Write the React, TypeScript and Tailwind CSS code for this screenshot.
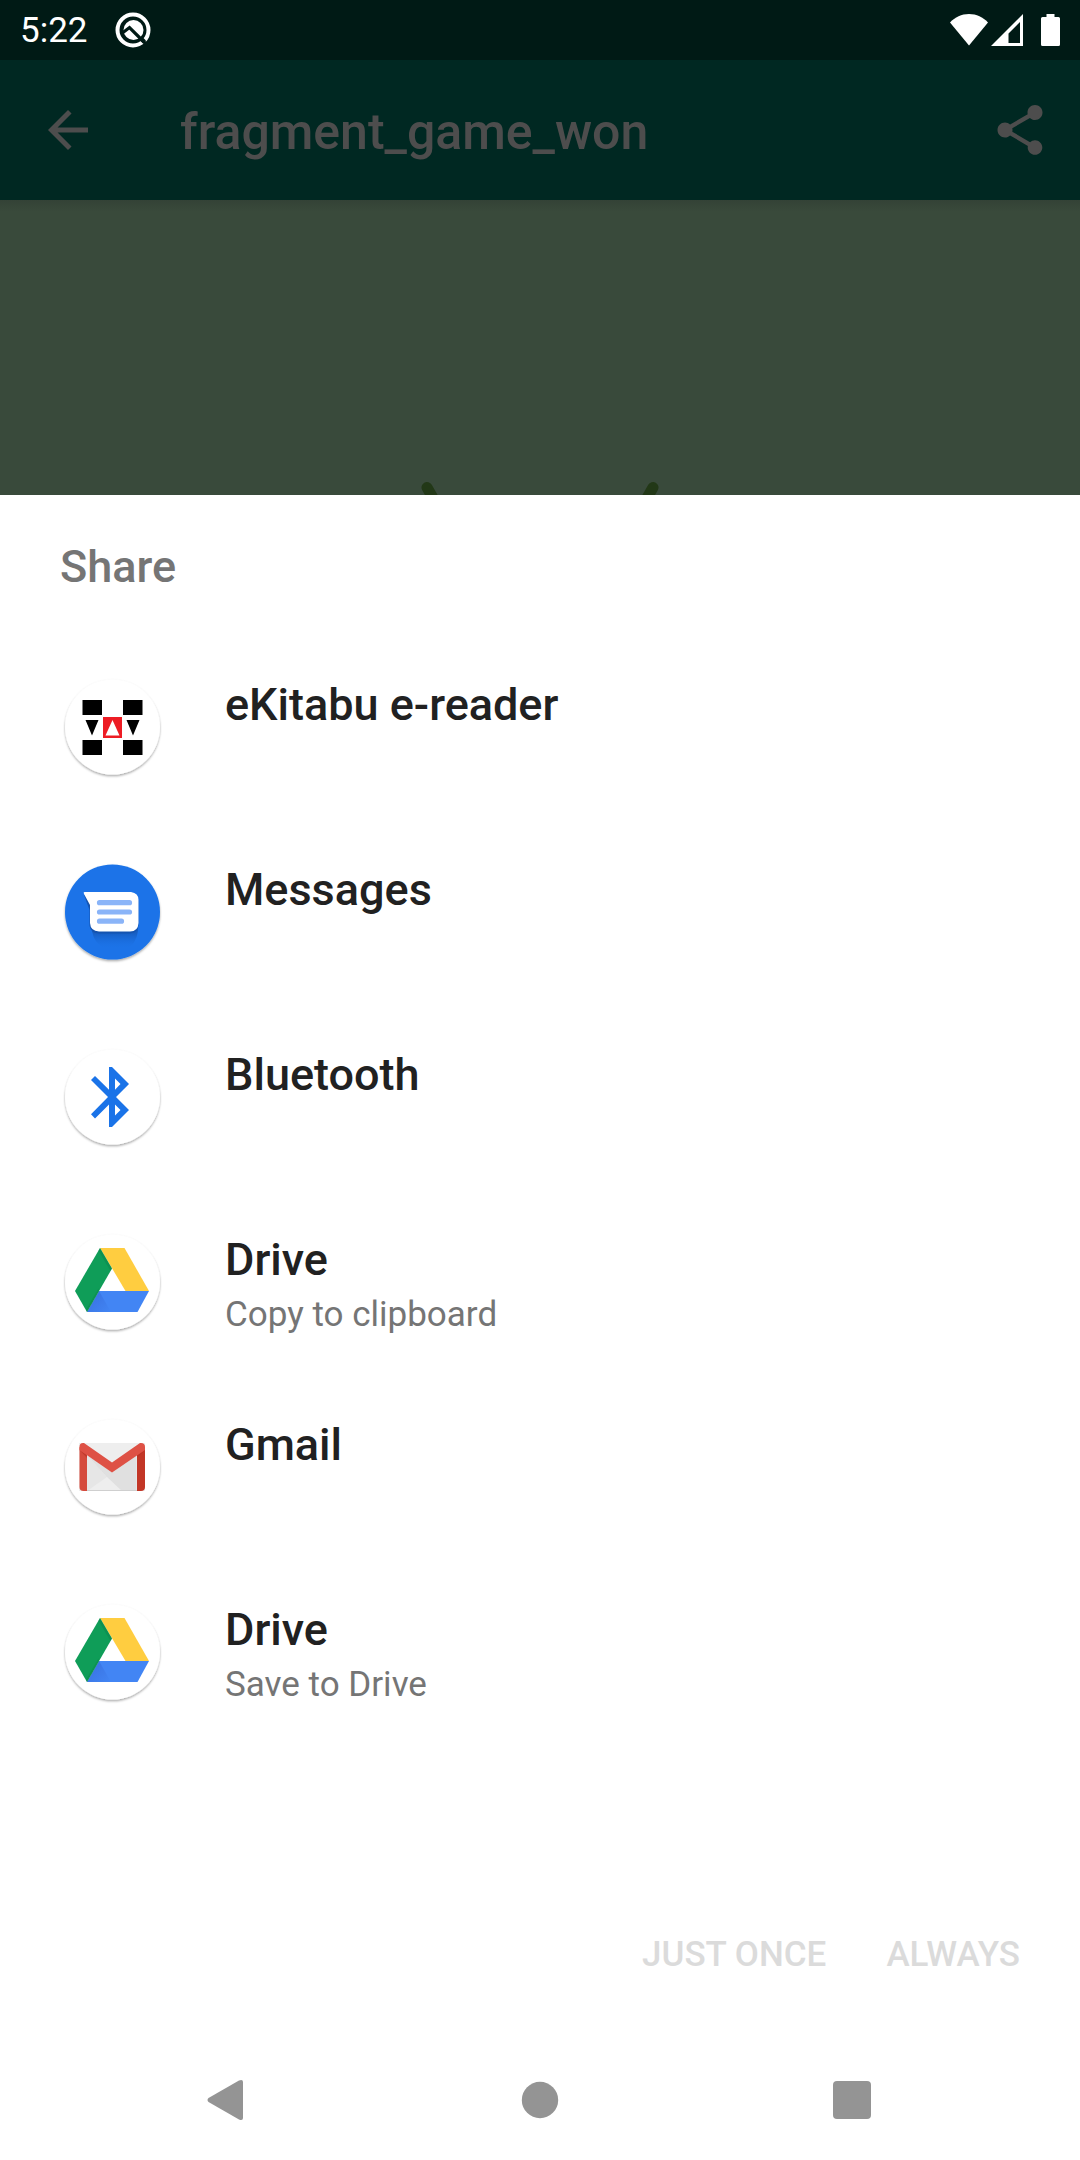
import React from "react";

function StatusBar() {
  return (
    <div className="flex h-[60px] items-center bg-[#001a15] pl-5 pr-5 text-white">
      <span className="pt-[2px] text-[35px] leading-[58px]">5:22</span>
      <svg className="ml-[27px] size-9" viewBox="0 0 36 36" fill="none" aria-hidden="true">
        <circle cx="18" cy="18" r="15.500" stroke="#fff" strokeWidth="4" />
        <circle cx="18.500" cy="18" r="10" fill="#fff" />
        <path d="M6 22L14.500 15.500L31.500 32.500" stroke="#001a15" strokeWidth="3.200" />
        <path d="M25.500 26L29.500 30" stroke="#001a15" strokeWidth="4" />
      </svg>
      <div className="ml-auto flex items-center">
        <svg className="h-8 w-[38px]" viewBox="0 0 38 32" fill="#fff" aria-hidden="true">
          <path d="M0 8.500C5 3.200 11.500 0 19 0S33 3.200 38 8.500L19 31.500Z" />
        </svg>
        <svg className="ml-[3px] size-8" viewBox="0 0 32 32" aria-hidden="true">
          <path fill="#fff" fillRule="evenodd" d="M0 32L32 0V32ZM17.500 29H29V8L17.500 19.500Z" />
        </svg>
        <svg className="ml-[18px] h-8 w-[19px]" viewBox="0 0 19 32" fill="#fff" aria-hidden="true">
          <path d="M5.500 0H13.500V3H17.500Q19 3 19 4.500V30.500Q19 32 17.500 32H1.500Q0 32 0 30.500V4.500Q0 3 1.500 3H5.500Z" />
        </svg>
      </div>
    </div>
  );
}

function Toolbar() {
  return (
    <header className="flex h-[140px] items-center bg-[#002822] pl-[38px] pr-[30px] text-[#4d4d4d]">
      <button type="button" aria-label="Navigate up" className="size-[60px]">
        <svg viewBox="0 0 24 24" fill="currentColor">
          <path d="M20 11H7.830l5.590-5.590L12 4l-8 8 8 8 1.410-1.410L7.830 13H20v-2z" />
        </svg>
      </button>
      <h1 className="ml-[82px] pt-1 text-[50px] font-medium leading-[60px]">fragment_game_won</h1>
      <button type="button" aria-label="Share" className="ml-auto size-[60px]">
        <svg viewBox="0 0 24 24" fill="currentColor">
          <path d="M18 16.080c-.76 0-1.440.3-1.960.77L8.910 12.700c.05-.23.090-.46.090-.7s-.04-.47-.09-.7l7.050-4.110c.54.5 1.250.81 2.040.81 1.660 0 3-1.340 3-3s-1.340-3-3-3-3 1.340-3 3c0 .24.040.47.090.7L8.040 9.810C7.500 9.310 6.790 9 6 9c-1.660 0-3 1.340-3 3s1.340 3 3 3c.79 0 1.500-.31 2.040-.81l7.120 4.160c-.05.21-.08.43-.08.65 0 1.610 1.310 2.920 2.920 2.920s2.920-1.310 2.920-2.920-1.310-2.920-2.920-2.920z" />
        </svg>
      </button>
    </header>
  );
}

function Scene() {
  return (
    <div className="flex flex-1 flex-col items-center justify-end bg-[#394a3b]">
      <div className="mb-auto h-3 w-full bg-linear-to-b from-[#334236] to-[#394a3b]" />
      <svg className="h-[14px] w-[240px]" viewBox="0 0 240 14" aria-hidden="true">
        <g stroke="#223817" strokeWidth="11" strokeLinecap="round">
          <path d="M7 6.500L17 24M233 6.500L223 24" />
        </g>
      </svg>
    </div>
  );
}

function Disc({ blue, children }: { blue?: boolean; children: React.ReactNode }) {
  return (
    <svg className="size-[120px] shrink-0" viewBox="0 0 120 120" aria-hidden="true">
      <defs>
        <filter id="disc-shadow" x="-20%" y="-20%" width="140%" height="140%">
          <feDropShadow dx="0" dy="1.500" stdDeviation="1.300" floodColor="#000" floodOpacity="0.350" />
        </filter>
      </defs>
      <circle cx="60.500" cy="60" r="47.500" fill={blue ? "#1a73e8" : "#fff"} filter="url(#disc-shadow)" />
      {children}
    </svg>
  );
}

function EKitabuIcon() {
  return (
    <Disc>
      <path d="M30.500 33H50V48H30.500ZM71 33H90.500V48H71ZM30.500 73H50V88H30.500ZM71 73H90.500V88H71Z" />
      <path d="M33.500 53H46.500L40 68.500ZM74.500 53H87.500L81 68.500Z" />
      <path fill="#ed1c24" d="M51 50H70V71H51Z" />
      <path fill="#fff" d="M60.500 53L67.500 68.500H53.500Z" />
    </Disc>
  );
}

function MessagesIcon() {
  return (
    <Disc blue>
      <defs>
        <linearGradient id="bubble-shade" x1="0" y1="0" x2="0" y2="1">
          <stop offset="0.400" stopColor="#1558b8" stopOpacity="0.800" />
          <stop offset="1" stopColor="#1a73e8" stopOpacity="0" />
        </linearGradient>
      </defs>
      <path fill="url(#bubble-shade)" d="M40 70H86V79Q84 93 74 97H54Q42 92 40 79Z" />
      <path fill="#1554b0" d="M32 43L37.500 58V74Q39 81.500 47 81.500H78Q86.500 81 86.500 73V48Z" />
      <path fill="#fff" d="M32.500 40H79Q86.500 41 86.500 48V71Q86 79.500 78 79.500H47Q38.500 79 38 71V53L32 42Q31 40 32.500 40Z" />
      <path stroke="#8ab4f8" strokeWidth="5.200" strokeLinecap="round" d="M47.500 50.700H77.500M47.500 60H77.500M47.500 69.200H69.500" />
    </Disc>
  );
}

function BluetoothIcon() {
  return (
    <Disc>
      <path
        fill="#1a73e8"
        fillRule="evenodd"
        d="M57 30H60L77 47L64 60L77 73L60 90H57V67.500L43 81.500L39 77.300L56 60L39 43L43 39L57 52.700ZM63 41.500V52.700L68.500 47.100ZM63 67.500V78.500L68.500 73Z"
      />
    </Disc>
  );
}

function DriveIcon() {
  return (
    <Disc>
      <defs>
        <linearGradient id="drive-blue" x1="0" y1="0" x2="1" y2="1">
          <stop offset="0" stopColor="#3367d6" />
          <stop offset="1" stopColor="#4285f4" />
        </linearGradient>
      </defs>
      <path fill="#4285f4" d="M47 69H97L85.500 90H35Z" />
      <path fill="url(#drive-blue)" d="M47 69L59 90H35Z" opacity="0.700" />
      <path fill="#ffcd40" d="M48 26H72.500L97 69H73.500Z" />
      <path fill="#0f9d58" d="M48 26L60 46.500L35 90L23 69Z" />
      <path fill="#0b8048" opacity="0.400" d="M48 26L60 46.500L58.500 49L46.500 28.500ZM33.800 88L46.500 66.500L47 69L35 90Z" />
    </Disc>
  );
}

function GmailIcon() {
  return (
    <Disc>
      <path fill="#eeeeee" d="M27 36H93V84H27Z" />
      <path fill="#d6d6d6" d="M35 48L55 70L35 84Z" opacity="0.350" />
      <path fill="#d2d2d2" d="M35 48L60 65L84.500 48V84H70L55 70Z" opacity="0.500" />
      <path fill="#cfcfcf" d="M35 83H85V84H35Z" />
      <path fill="#d54b3d" d="M27.500 40L35 47V84H31.500Q27.500 84 27.500 80Z" />
      <path fill="#c23626" d="M93 40L85 47V84H89Q93 84 93 80Z" />
      <path fill="#b63124" opacity="0.600" d="M27.500 43L35 48V51ZM93 43L85 48V51Z" />
      <path fill="#de5145" d="M27.500 40Q27.500 36 31 36H32L60 55.500L88 36H89Q93 36 93 40V43L60 65.500L27.500 43Z" />
    </Disc>
  );
}

const targets = [
  { label: "eKitabu e-reader", icon: <EKitabuIcon /> },
  { label: "Messages", icon: <MessagesIcon /> },
  { label: "Bluetooth", icon: <BluetoothIcon /> },
  { label: "Drive", detail: "Copy to clipboard", icon: <DriveIcon /> },
  { label: "Gmail", icon: <GmailIcon /> },
  { label: "Drive", detail: "Save to Drive", icon: <DriveIcon /> },
];

function ShareSheet() {
  return (
    <section className="bg-white">
      <h2 className="px-[60px] pt-[45px] text-[45px] font-medium leading-[54px] text-[#757575]">Share</h2>
      <ul className="pt-10">
        {targets.map((target) => (
          <li key={target.label + (target.detail ?? "")}>
            <button type="button" className="flex h-[185px] w-full items-center pl-[52px] pr-[60px] text-left">
              {target.icon}
              <span className="ml-[53px] flex h-[100px] flex-col">
                <span className="text-[45px] font-medium leading-[56px] text-[#212121]">{target.label}</span>
                {target.detail && <span className="text-[35px] leading-[54px] text-[#757575]">{target.detail}</span>}
              </span>
            </button>
          </li>
        ))}
      </ul>
      <div className="flex justify-end gap-[60px] px-[60px] pb-[58px] pt-[184px] text-[35px] font-medium leading-[54px] text-[#dbdbdb]">
        <button type="button" disabled>JUST ONCE</button>
        <button type="button" disabled>ALWAYS</button>
      </div>
    </section>
  );
}

function NavigationBar() {
  return (
    <nav className="flex h-[120px] items-center justify-center gap-[252px] bg-white text-[#949494]">
      <button type="button" aria-label="Back" className="size-[60px]">
        <svg viewBox="0 0 60 60" fill="currentColor">
          <path d="M10.500 28L41 10.500Q45 9 45 12V48Q45 51 41 49.500L10.500 32Q8.500 30 10.500 28Z" />
        </svg>
      </button>
      <button type="button" aria-label="Home" className="size-[60px]">
        <svg viewBox="0 0 60 60" fill="currentColor">
          <circle cx="30" cy="30" r="18.200" />
        </svg>
      </button>
      <button type="button" aria-label="Recent apps" className="size-[60px]">
        <svg viewBox="0 0 60 60" fill="currentColor">
          <rect x="11" y="11" width="38" height="38" rx="4" />
        </svg>
      </button>
    </nav>
  );
}

export default function App() {
  return (
    <div className="flex min-h-screen flex-col bg-white font-[Roboto,sans-serif]">
      <StatusBar />
      <Toolbar />
      <Scene />
      <ShareSheet />
      <NavigationBar />
    </div>
  );
}
